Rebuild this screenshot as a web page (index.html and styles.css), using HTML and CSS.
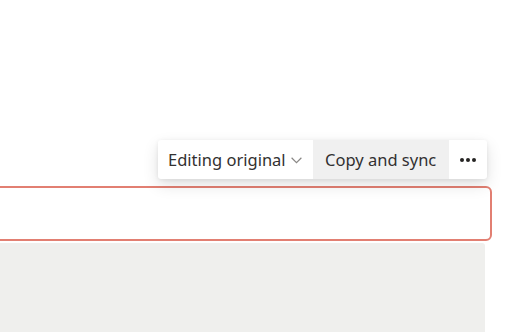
FILE: index.html
```html
<!DOCTYPE html>
<html>
<head>
<meta charset="utf-8">
<link rel="stylesheet" href="styles.css">
</head>
<body>
<div class="page">
  <div class="toolbar-row">
    <div class="toolbar">
      <button class="tb-item tb-mode">Editing original
        <svg class="chev" width="11" height="7" viewBox="0 0 11 7"><path d="M0.6 0.8 L5.5 5.6 L10.4 0.8" fill="none" stroke="#8a8886" stroke-width="1.2"/></svg>
      </button>
      <button class="tb-item tb-copy">Copy and sync</button>
      <button class="tb-item tb-more" aria-label="More">
        <span class="dot"></span><span class="dot"></span><span class="dot"></span>
      </button>
    </div>
  </div>
  <div class="editor"></div>
  <div class="panel"></div>
</div>
</body>
</html>
```
FILE: styles.css
```css
html, body {
  margin: 0;
  padding: 0;
  background: #ffffff;
  overflow: hidden;
}
.page {
  width: 520px;
  height: 332px;
  padding-top: 140px;
  box-sizing: border-box;
  font-family: "Noto Sans", "Open Sans", sans-serif;
}
.toolbar-row {
  display: flex;
  justify-content: flex-end;
  padding-right: 33px;
  position: relative;
  z-index: 2;
}
.toolbar {
  display: flex;
  height: 39px;
  background: #ffffff;
  border-radius: 3px;
  box-shadow: 0 6px 16px rgba(0,0,0,0.12), 0 1px 4px rgba(0,0,0,0.08);
  overflow: hidden;
}
.tb-item {
  border: 0;
  margin: 0;
  background: transparent;
  font-family: inherit;
  font-size: 16.5px;
  color: #323130;
  display: flex;
  align-items: center;
  padding: 0;
  cursor: pointer;
}
.tb-mode {
  width: 155px;
  padding-left: 10px;
  gap: 5px;
  box-sizing: border-box;
}
.tb-copy {
  width: 136px;
  background: #f0f0f0;
  padding-left: 12px;
  box-sizing: border-box;
}
.tb-more {
  width: 38px;
  justify-content: center;
  gap: 2px;
}
.dot {
  width: 4px;
  height: 4px;
  border-radius: 50%;
  background: #252423;
}
.chev {
  margin-top: 1px;
}
.editor {
  margin-top: 7px;
  margin-left: -10px;
  width: 502px;
  height: 55px;
  box-sizing: border-box;
  border: 2px solid #e27f72;
  border-radius: 6px;
  background: #ffffff;
  position: relative;
  z-index: 1;
}
.panel {
  margin-top: 2px;
  width: 485px;
  height: 100px;
  background: #efefed;
  border-top-right-radius: 3px;
}
```
